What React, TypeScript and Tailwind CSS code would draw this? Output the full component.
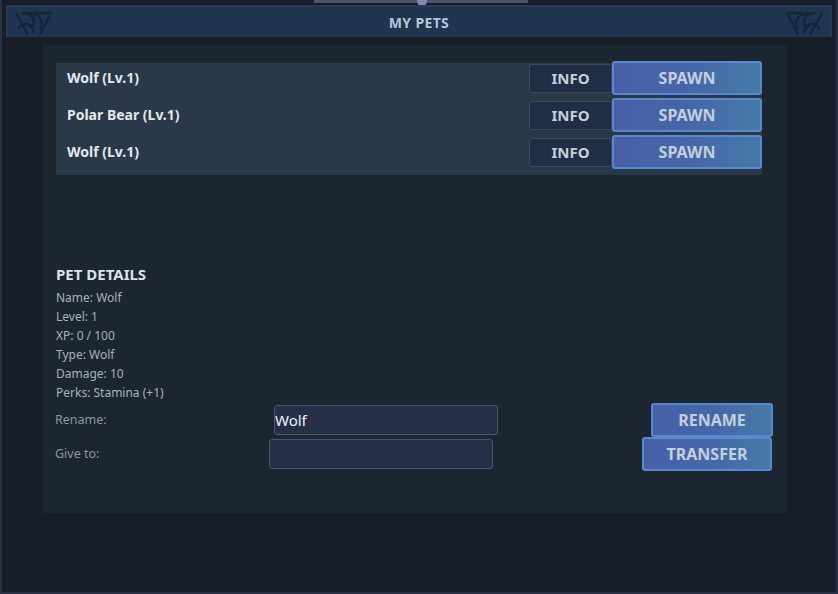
import React from "react";

const pets = [
  { name: "Wolf (Lv.1)" },
  { name: "Polar Bear (Lv.1)" },
  { name: "Wolf (Lv.1)" },
];

const details = [
  "Name: Wolf",
  "Level: 1",
  "XP: 0 / 100",
  "Type: Wolf",
  "Damage: 10",
  "Perks: Stamina (+1)",
];

function Corner({ flip }: { flip?: boolean }) {
  return (
    <svg
      width="40"
      height="28"
      viewBox="0 0 40 28"
      className={flip ? "absolute right-[6px] top-[4px] -scale-x-100" : "absolute left-[6px] top-[4px]"}
    >
      <g fill="none" stroke="#16263a" strokeWidth="2.5">
        <path d="M2 2 L14 24" />
        <path d="M8 2 C20 2 22 10 18 16" />
        <path d="M14 2 C28 2 30 12 26 18" />
        <path d="M20 2 L38 2" />
        <path d="M4 18 C10 10 18 12 20 22" />
        <path d="M36 4 L26 24" />
      </g>
    </svg>
  );
}

const blueBtn =
  "rounded-[3px] border-2 border-[#5889cf] bg-gradient-to-r from-[#4860a8] via-[#4666a8] to-[#447aa8] text-[16px] font-bold text-[#c3cfdc]";

export default function App() {
  return (
    <div
      className="relative w-[838px] h-[594px] bg-[#181d2a] border-l-2 border-r-2 border-b-2 border-[#2a3346] flex flex-col overflow-hidden"
      style={{ fontFamily: "'Noto Sans', Lato, sans-serif" }}
    >
      {/* top trim */}
      <div className="absolute left-[312px] top-0 w-[214px] h-[3px] bg-[#4c5570]" />
      <div className="absolute left-[415px] top-0 w-[10px] h-[6px] rounded-b-full bg-[#7d8cab]" />

      {/* header */}
      <div className="relative mt-[5px] mx-[4px] h-[32px] border-t-2 border-x-2 border-[#2c3950] bg-[#1f3550] flex items-center justify-center">
        <Corner />
        <Corner flip />
        <span className="text-[14px] font-bold tracking-wide text-[#b7c5d4]">MY PETS</span>
      </div>

      {/* body panel */}
      <div className="mt-[8px] ml-[40px] w-[745px] h-[468px] bg-[#1b2630] flex flex-col px-[14px] pt-[18px]">
        {/* pet list */}
        <div className="w-[706px] h-[112px] bg-[#2a3947]">
          <div className="mt-[-4px] flex flex-col">
            {pets.map((p, i) => (
              <div key={i} className="h-[37px] flex items-center">
                <span className="ml-[11px] text-[14px] font-bold text-[#e3e8ed] flex-1">{p.name}</span>
                <button className="mt-[2px] w-[83px] h-[29px] bg-[#1f2d45] border border-[#39495c] rounded-[2px] text-[15px] font-bold text-[#c6d0dc]">
                  INFO
                </button>
                <button className={"w-[150px] h-[34px] " + blueBtn}>SPAWN</button>
              </div>
            ))}
          </div>
        </div>

        {/* details */}
        <div className="mt-[90px] flex flex-col">
          <div className="text-[15px] font-bold text-[#dde3e9] leading-[18px]">PET DETAILS</div>
          <div className="mt-[5px] flex flex-col">
            {details.map((d) => (
              <div key={d} className="text-[12px] leading-[19px] text-[#a8b2bb]">
                {d}
              </div>
            ))}
          </div>
        </div>

        {/* rename row */}
        <div className="mt-[1px] h-[34px] flex items-center">
          <span className="ml-[-1px] w-[219px] text-[12.5px] text-[#8c969f]">Rename:</span>
          <div className="w-[224px] h-[30px] bg-[#262f48] border border-[#4a5567] rounded-[3px] flex items-center text-[15px] text-[#eef1f5]">
            Wolf
          </div>
          <div className="flex-1" />
          <button className={"w-[122px] h-[34px] " + blueBtn}>RENAME</button>
        </div>

        {/* give row */}
        <div className="h-[34px] flex items-center">
          <span className="ml-[-1px] w-[214px] text-[12.5px] text-[#8c969f]">Give to:</span>
          <div className="w-[224px] h-[30px] bg-[#262f48] border border-[#4a5567] rounded-[3px]" />
          <div className="flex-1" />
          <button className={"mr-[1px] w-[130px] h-[34px] " + blueBtn}>TRANSFER</button>
        </div>
      </div>
    </div>
  );
}
